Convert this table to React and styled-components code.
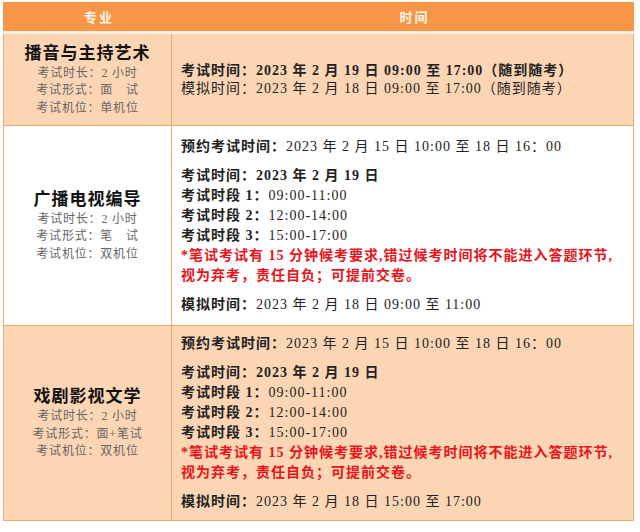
import React from "react";
import styled, { createGlobalStyle } from "styled-components";

const Global = createGlobalStyle`
  body {
    margin: 0;
    background: #ffffff;
    font-family: "Liberation Serif", "Noto Sans CJK SC", serif;
  }
`;

const Table = styled.div`
  width: 631px;
  margin: 2px 0 0 3px;
  display: flex;
  flex-direction: column;
`;

const Head = styled.div`
  display: grid;
  grid-template-columns: 192px 1fr;
  height: 29px;
  background: #f79646;
  border-bottom: 3px solid #fdeee2;
`;

const HeadCell = styled.div`
  display: flex;
  align-items: center;
  justify-content: center;
  color: #fff6ee;
  font-family: "Noto Sans CJK SC", sans-serif;
  font-size: 13px;
  font-weight: 700;
  letter-spacing: 2px;
`;

const Row = styled.div`
  display: grid;
  grid-template-columns: 168px 1fr;
  height: ${(p) => p.h}px;
  background: ${(p) => (p.shaded ? "#fcd5b4" : "#ffffff")};
  border-left: 1px solid #f2a869;
  border-right: 1px solid #f2a869;
  border-bottom: 1px solid #f2a869;
  box-sizing: border-box;
`;

const Major = styled.div`
  display: flex;
  flex-direction: column;
  align-items: center;
  justify-content: center;
  border-right: 1px solid #f2a869;
  padding-bottom: 2px;
`;

const Title = styled.div`
  font-family: "Noto Sans CJK SC", sans-serif;
  font-size: 17px;
  font-weight: 700;
  letter-spacing: 1px;
  color: #111;
  line-height: 24px;
  margin-bottom: 1px;
`;

const Info = styled.div`
  font-size: 12px;
  color: #666;
  line-height: 17.5px;
  letter-spacing: 0.8px;
`;

const Times = styled.div`
  display: flex;
  flex-direction: column;
  justify-content: center;
  padding-left: 9px;
  font-size: 14px;
  letter-spacing: 1px;
  color: #222;
`;

const Block = styled.div`
  & + & {
    margin-top: 9px;
  }
`;

const Line = styled.div`
  line-height: ${(p) => p.lh || 20}px;
  white-space: nowrap;
  font-weight: ${(p) => (p.bold ? 700 : 400)};
  color: ${(p) => (p.red ? "#e8141b" : "#222")};
`;

const B = styled.b`
  font-weight: 700;
`;

const Note = () => (
  <>
    <Line bold red>
      *笔试考试有 15 分钟候考要求,错过候考时间将不能进入答题环节,
    </Line>
    <Line bold red>
      视为弃考，责任自负；可提前交卷。
    </Line>
  </>
);

const Written = ({ mock }) => (
  <Times>
    <Block>
      <Line>
        <B>预约考试时间：</B>2023 年 2 月 15 日 10:00 至 18 日 16：00
      </Line>
    </Block>
    <Block>
      <Line bold>考试时间：2023 年 2 月 19 日</Line>
      <Line>
        <B>考试时段 1：</B>09:00-11:00
      </Line>
      <Line>
        <B>考试时段 2：</B>12:00-14:00
      </Line>
      <Line>
        <B>考试时段 3：</B>15:00-17:00
      </Line>
      <Note />
    </Block>
    <Block>
      <Line>
        <B>模拟时间：</B>
        {mock}
      </Line>
    </Block>
  </Times>
);

const MajorCell = ({ name, length, form, seat }) => (
  <Major>
    <Title>{name}</Title>
    <Info>考试时长：{length}</Info>
    <Info>考试形式：{form}</Info>
    <Info>考试机位：{seat}</Info>
  </Major>
);

export default function App() {
  return (
    <>
      <Global />
      <Table>
        <Head>
          <HeadCell>专业</HeadCell>
          <HeadCell>时间</HeadCell>
        </Head>
        <Row shaded h={92}>
          <MajorCell name="播音与主持艺术" length="2 小时" form="面　试" seat="单机位" />
          <Times>
            <Line bold lh={18}>
              考试时间：2023 年 2 月 19 日 09:00 至 17:00（随到随考）
            </Line>
            <Line lh={18}>
              模拟时间：2023 年 2 月 18 日 09:00 至 17:00（随到随考）
            </Line>
          </Times>
        </Row>
        <Row h={200}>
          <MajorCell name="广播电视编导" length="2 小时" form="笔　试" seat="双机位" />
          <Written mock="2023 年 2 月 18 日 09:00 至 11:00" />
        </Row>
        <Row shaded h={195}>
          <MajorCell name="戏剧影视文学" length="2 小时" form="面+笔试" seat="双机位" />
          <Written mock="2023 年 2 月 18 日 15:00 至 17:00" />
        </Row>
      </Table>
    </>
  );
}
